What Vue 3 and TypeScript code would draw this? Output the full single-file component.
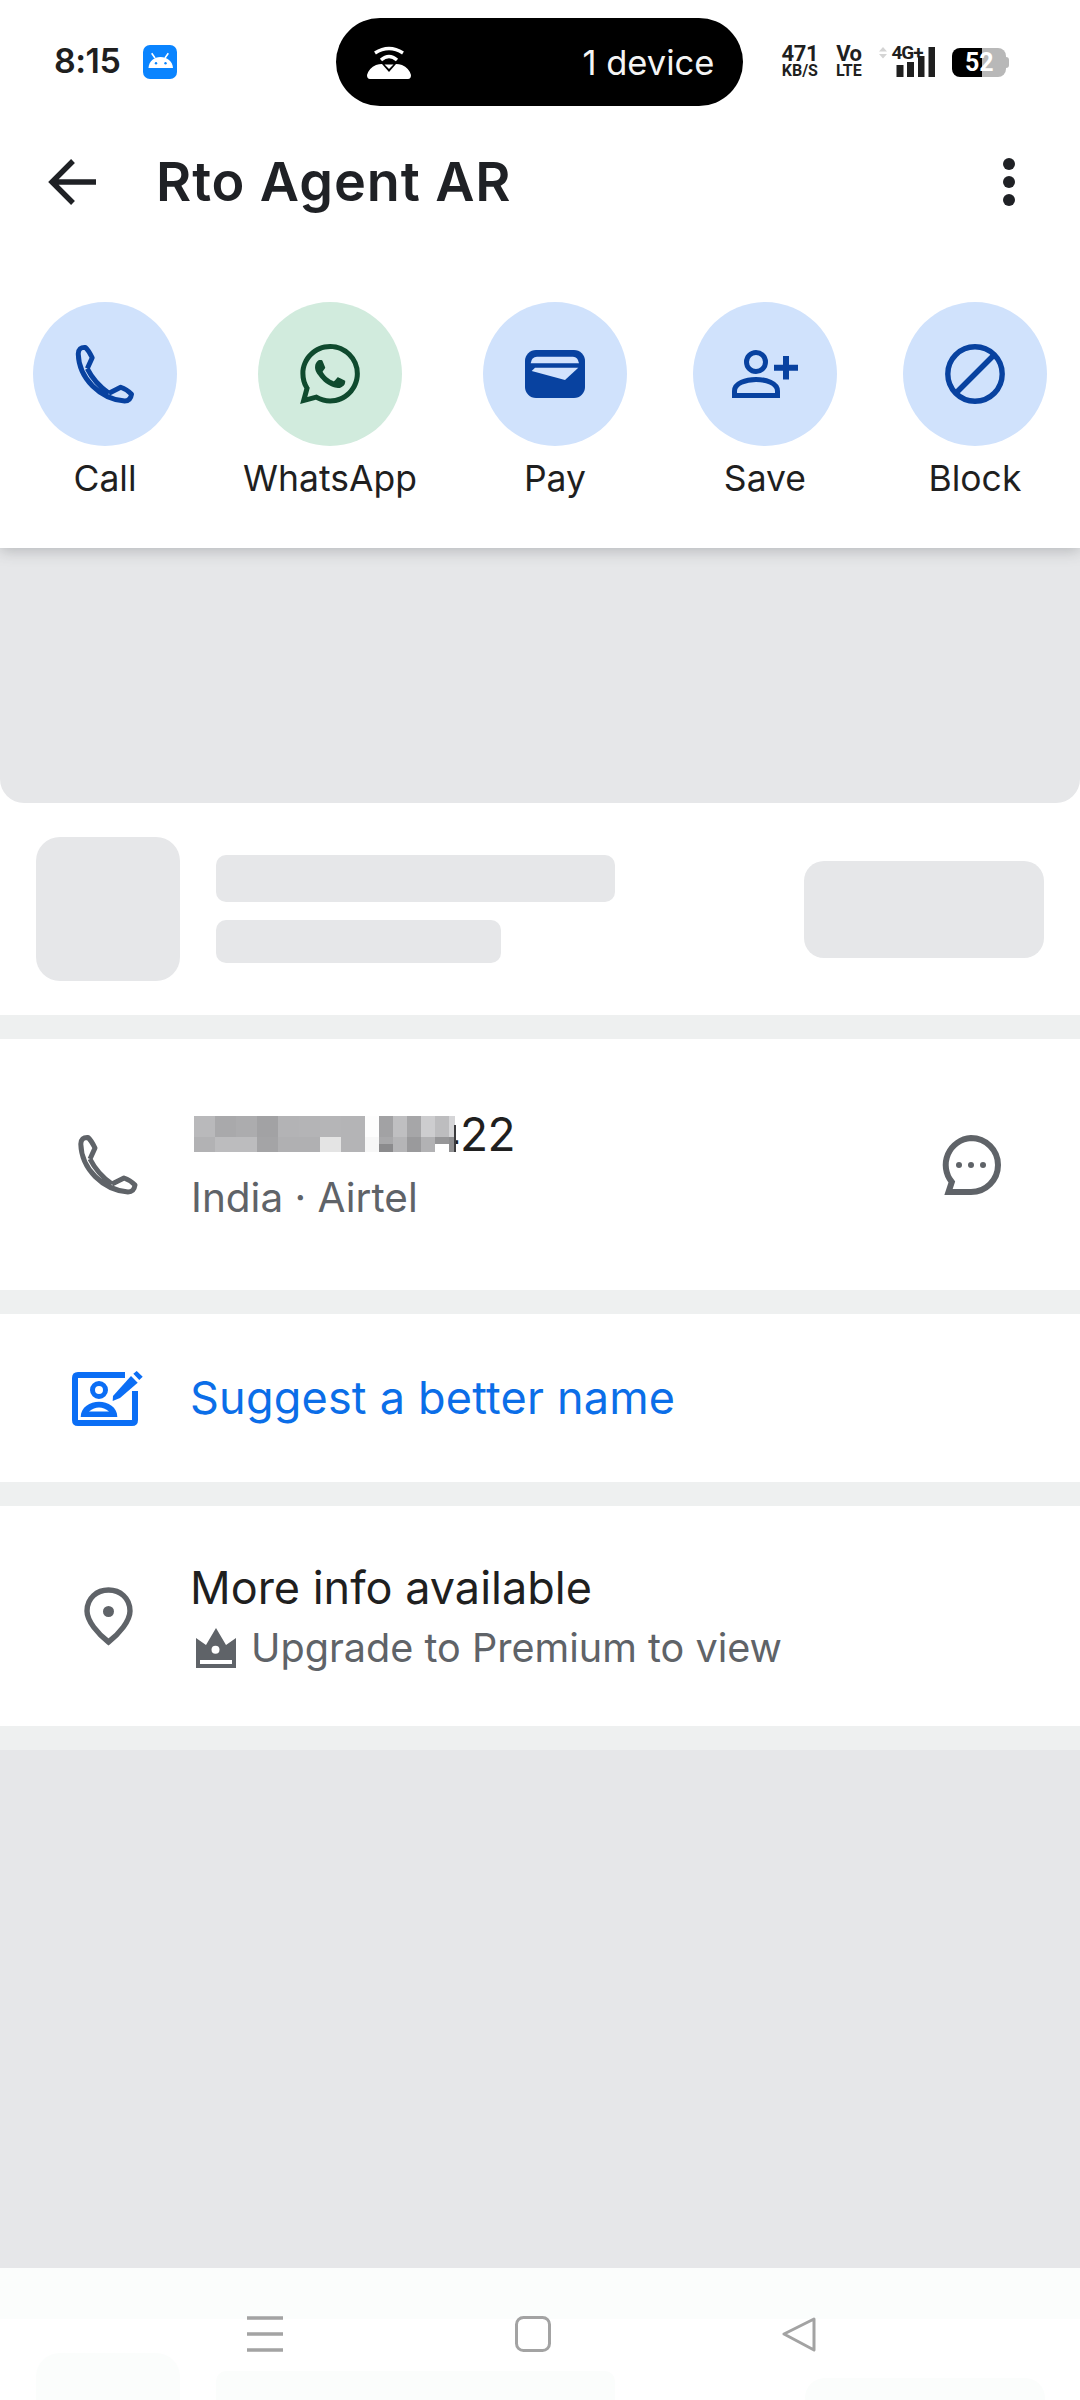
<script setup lang="ts">
const actions = [
  { label: 'Call', icon: 'call', tone: 'blue' },
  { label: 'WhatsApp', icon: 'whatsapp', tone: 'green' },
  { label: 'Pay', icon: 'pay', tone: 'blue' },
  { label: 'Save', icon: 'save', tone: 'blue' },
  { label: 'Block', icon: 'block', tone: 'blue' },
]

const handset = 'M12 25 L17 14 Q13 6 10 3.5 Q3 3 2.8 10 C3.5 35 25 56 50 58 Q56 58 57 51 Q52 46 46 44 L34 50 M12 25 C17 35 24 43 34 50'

// blurred part of the phone number, one entry per mosaic column
const mosaic = [
  { w: 21, top: '#b9b9bb', bottom: '#b2b2b4' },
  { w: 21, top: '#a9a9ab', bottom: '#bcbcbe' },
  { w: 21, top: '#acacae', bottom: '#bcbcbe' },
  { w: 21, top: '#a2a2a4', bottom: '#a4a4a6' },
  { w: 21, top: '#b3b3b5', bottom: '#b0b0b2' },
  { w: 21, top: '#b4b4b6', bottom: '#b0b0b2' },
  { w: 21, top: '#b5b5b7', bottom: '#e4e4e4' },
  { w: 24, top: '#b4b4b6', bottom: '#b4b4b6' },
  { w: 14, top: '#fdfdfd', bottom: '#f7f7f7' },
  { w: 14, top: '#a2a2a4', bottom: 'linear-gradient(#a8a8aa 7px, #8b8b8d 7px)' },
  { w: 14, top: '#bfbfc1', bottom: '#b5b5b7' },
  { w: 14, top: '#a6a6a8', bottom: '#9a9a9c' },
  { w: 14, top: '#cdcdcf', bottom: '#b2b2b4' },
  { w: 14, top: '#bdbdbf', bottom: 'linear-gradient(#969698 7px, #fff 7px)' },
  { w: 6, top: '#d5d5d7', bottom: '#8f8f91' },
]
</script>

<template>
  <div class="screen">
    <div class="top">
      <div class="status">
        <span class="time">8:15</span>
        <svg class="android" viewBox="0 0 34 34">
          <rect width="34" height="34" rx="7" fill="#0a84ff" />
          <path d="M8.7 8.3 12 13M25.3 8.3 22 13" stroke="#fff" stroke-width="1.6" />
          <path d="M5.5 23 C6 16 11 12 17.5 12 S29.5 16 30 23Z" fill="#fff" />
          <circle cx="13" cy="18.3" r="1.2" fill="#0a84ff" />
          <circle cx="22.5" cy="18.3" r="1.2" fill="#0a84ff" />
        </svg>
        <div class="pill">
          <svg class="hotspot" viewBox="0 0 44 33">
            <path d="M8 7Q22-2 36 7M14 14Q22 7 30 14" fill="none" stroke="#fff" stroke-width="3.4" />
            <path d="M17.5 18.5 H26.5 L22 23Z" fill="#fff" />
            <path d="M3 33 H41 Q44 33 44 29 Q42 22 35 19 Q32 18 29 18 L22 26 L15 18 Q12 18 9 19 Q2 22 0 29 Q0 33 3 33Z" fill="#fff" />
          </svg>
          <span class="pill-text">1 device</span>
        </div>
        <div class="tiny speed"><b>471</b><i>KB/S</i></div>
        <div class="tiny volte"><b>Vo</b><i>LTE</i></div>
        <div class="signal">
          <svg class="signal-bars" viewBox="0 0 56 30">
            <path d="M0 4.5 4 0 8 4.5ZM0 7 8 7 4 11.5Z" fill="#d4d4d4" />
            <rect x="17.5" y="18" width="7" height="12" fill="#1f1f1f" />
            <rect x="28" y="15" width="7" height="15" fill="#1f1f1f" />
            <rect x="39" y="9" width="6.5" height="21" fill="#1f1f1f" />
            <rect x="49.5" y="0" width="6.5" height="30" fill="#1f1f1f" />
          </svg>
          <span class="net">4G+</span>
        </div>
        <div class="battery"><span>52</span></div>
      </div>

      <header class="appbar">
        <svg class="back" viewBox="0 0 48 48">
          <path d="M48 24H4M25 3 4 24 25 45" fill="none" stroke="#1f2125" stroke-width="5.4" />
        </svg>
        <h1 class="title">Rto Agent AR</h1>
        <div class="more"><i></i><i></i><i></i></div>
      </header>

      <div class="actions">
        <div v-for="a in actions" :key="a.label" class="action">
          <div class="circle" :class="a.tone">
            <svg v-if="a.icon === 'call'" class="ic60" viewBox="0 0 60 61">
              <path :d="handset" fill="none" stroke="#0842a0" stroke-width="5" stroke-linejoin="round" />
            </svg>
            <svg v-else-if="a.icon === 'whatsapp'" class="ic60" viewBox="0 0 24 24">
              <path fill="#0f4a2e" d="M17.472 14.382c-.297-.149-1.758-.867-2.03-.967-.273-.099-.471-.148-.67.15-.197.297-.767.966-.94 1.164-.173.199-.347.223-.644.075-.297-.15-1.255-.463-2.39-1.475-.883-.788-1.48-1.761-1.653-2.059-.173-.297-.018-.458.13-.606.134-.133.298-.347.446-.52.149-.174.198-.298.298-.497.099-.198.05-.371-.025-.52-.075-.149-.669-1.612-.916-2.207-.242-.579-.487-.5-.669-.51-.173-.008-.371-.01-.57-.01-.198 0-.52.074-.792.372-.272.297-1.04 1.016-1.04 2.479 0 1.462 1.065 2.875 1.213 3.074.149.198 2.096 3.2 5.077 4.487.709.306 1.262.489 1.694.625.712.227 1.36.195 1.871.118.571-.085 1.758-.719 2.006-1.413.248-.694.248-1.289.173-1.413-.074-.124-.272-.198-.57-.347m-5.421 7.403h-.004a9.87 9.87 0 01-5.031-1.378l-.361-.214-3.741.982.998-3.648-.235-.374a9.86 9.86 0 01-1.51-5.26c.001-5.45 4.436-9.884 9.888-9.884 2.64 0 5.122 1.03 6.988 2.898a9.825 9.825 0 012.893 6.994c-.003 5.45-4.437 9.884-9.885 9.884m8.413-18.297A11.815 11.815 0 0012.05 0C5.495 0 .16 5.335.157 11.892c0 2.096.547 4.142 1.588 5.945L.057 24l6.305-1.654a11.882 11.882 0 005.683 1.448h.005c6.554 0 11.89-5.335 11.893-11.893a11.821 11.821 0 00-3.48-8.413z" />
            </svg>
            <svg v-else-if="a.icon === 'pay'" class="ic-pay" viewBox="0 0 60 48">
              <rect width="60" height="48" rx="11" fill="#0842a0" />
              <path d="M5.7 13.3Q6.5 6.7 12 6.7H48Q53 6.7 54 13.3Z" fill="#d3e3fd" />
              <path d="M6.7 21 10 17.7H53.3L40 30Z" fill="#d3e3fd" />
            </svg>
            <svg v-else-if="a.icon === 'save'" class="ic-save" viewBox="0 0 66 48">
              <circle cx="24" cy="12" r="9.5" fill="none" stroke="#0842a0" stroke-width="5" />
              <path d="M2.5 45.5V41C2.5 33 14 29.5 24 29.5S45.5 33 45.5 41V45.5Z" fill="none" stroke="#0842a0" stroke-width="5" />
              <path d="M42 17.7H66M54 6V29.5" stroke="#0842a0" stroke-width="6" />
            </svg>
            <svg v-else class="ic60" viewBox="0 0 60 60">
              <circle cx="30" cy="30" r="27.2" fill="none" stroke="#0842a0" stroke-width="5.4" />
              <path d="M11 49 49 11" stroke="#0842a0" stroke-width="5.4" />
            </svg>
          </div>
          <span class="action-label">{{ a.label }}</span>
        </div>
      </div>
    </div>

    <div class="hero"></div>

    <div class="skeleton">
      <div class="sk-square"></div>
      <div class="sk-lines">
        <div class="sk-line one"></div>
        <div class="sk-line two"></div>
      </div>
      <div class="sk-button"></div>
    </div>

    <section class="row phone-row">
      <svg class="row-phone" viewBox="0 0 60 61">
        <path :d="handset" fill="none" stroke="#5f6368" stroke-width="5" stroke-linejoin="round" />
      </svg>
      <div class="row-text">
        <div class="number">
          <span class="digits">422</span>
          <div class="blur">
            <div v-for="(c, i) in mosaic" :key="i" class="blur-col" :style="{ width: c.w + 'px' }">
              <span :style="{ background: c.top }"></span>
              <span :style="{ background: c.bottom }"></span>
            </div>
          </div>
        </div>
        <div class="sub">India · Airtel</div>
      </div>
      <svg class="chat" viewBox="0 0 60 60">
        <path d="M30 3A27 27 0 0 1 30 57H7.5L10.8 47A27 27 0 0 1 30 3Z" fill="none" stroke="#5f6368" stroke-width="6" />
        <circle cx="18" cy="30" r="3" fill="#5f6368" />
        <circle cx="30" cy="30" r="3" fill="#5f6368" />
        <circle cx="42" cy="30" r="3" fill="#5f6368" />
      </svg>
    </section>

    <section class="row suggest-row">
      <svg class="edit" viewBox="0 -2 73 56">
        <path d="M53 3H6Q3 3 3 6V48Q3 51 6 51H60Q63 51 63 48V19" fill="none" stroke="#0b6ef5" stroke-width="6" />
        <path d="M40.7 29 41 24 59 4 65.7 10.7 48 26Z" fill="#0b6ef5" />
        <path d="M61.3 1.7 64.7-1 70.7 4.7 67.3 8Z" fill="#0b6ef5" />
        <circle cx="27" cy="18" r="6.5" fill="none" stroke="#0b6ef5" stroke-width="5" />
        <path d="M8.7 45C8.7 35 18 29.7 27 29.7S45.3 35 45.3 45Z" fill="#0b6ef5" />
        <path d="M17 39.5Q27 31.5 37 39.5Z" fill="#fff" />
      </svg>
      <span class="suggest">Suggest a better name</span>
    </section>

    <section class="row info-row">
      <svg class="pin" viewBox="0 0 49 59">
        <path d="M24.5 3C36 3 46 11 46 24C46 34 35 47 24.5 55C14 47 3 34 3 24C3 11 13 3 24.5 3Z" fill="none" stroke="#5f6368" stroke-width="5.4" />
        <circle cx="24.5" cy="24.5" r="5.5" fill="#5f6368" />
      </svg>
      <div class="row-text">
        <div class="more-info">More info available</div>
        <div class="sub upgrade">
          <svg class="crown" viewBox="0 0 40 40">
            <path d="M0 10 10 17 20 0 30 17 40 10V40H0Z" fill="#5f6368" />
            <rect x="4" y="32" width="32" height="4" fill="#fff" />
            <circle cx="19.5" cy="21.7" r="4" fill="#fff" />
          </svg>
          <span>Upgrade to Premium to view</span>
        </div>
      </div>
    </section>

    <div class="filler"></div>

    <nav class="nav">
      <div class="nav-ghost ghost-hero"></div>
      <div class="nav-ghost ghost-a"></div>
      <div class="nav-ghost ghost-b"></div>
      <div class="nav-ghost ghost-c"></div>
      <svg class="nav-ic menu" viewBox="0 0 36 36">
        <path d="M0 2H36M0 18H36M0 34H36" stroke="#a3a3a3" stroke-width="3.4" />
      </svg>
      <svg class="nav-ic home" viewBox="0 0 36 36">
        <rect x="1.5" y="1.5" width="33" height="33" rx="7" fill="none" stroke="#a3a3a3" stroke-width="3" />
      </svg>
      <svg class="nav-ic tri" viewBox="0 0 36 36">
        <path d="M33 3 3 18 33 34Z" fill="none" stroke="#a3a3a3" stroke-width="3" stroke-linejoin="round" />
      </svg>
    </nav>
  </div>
</template>

<style scoped>
.screen {
  width: 1080px;
  height: 2400px;
  display: flex;
  flex-direction: column;
  background: #fff;
  font-family: Inter, "Liberation Sans", sans-serif;
  color: #1f1f1f;
  overflow: hidden;
}

.top {
  height: 548px;
  flex: none;
  background: #fff;
  position: relative;
  z-index: 1;
  box-shadow: 0 3px 14px rgba(60, 64, 67, 0.28);
}

.status {
  height: 124px;
  display: flex;
  align-items: flex-start;
  padding-left: 54px;
}

.time {
  margin-top: 40px;
  font-size: 34px;
  line-height: 41px;
  font-weight: 600;
  letter-spacing: -0.5px;
}

.android {
  width: 34px;
  height: 34px;
  margin: 45px 0 0 23px;
}

.pill {
  width: 407px;
  height: 88px;
  margin: 18px 38px 0 159px;
  border-radius: 44px;
  background: #000;
  display: flex;
  align-items: center;
  justify-content: space-between;
  padding: 0 29px 0 31px;
  box-sizing: border-box;
}

.hotspot {
  width: 44px;
  height: 33px;
}

.pill-text {
  color: #f4f4f4;
  font-size: 34.5px;
  line-height: 44px;
  margin-top: 2px;
}

.tiny {
  margin-top: 44px;
  display: flex;
  flex-direction: column;
  align-items: center;
  font-family: Roboto, "Liberation Sans", sans-serif;
  color: #1f1f1f;
}

.tiny b {
  font-size: 22px;
  line-height: 19px;
  font-weight: 700;
  letter-spacing: -0.4px;
}

.tiny i {
  font-style: normal;
  font-size: 16px;
  line-height: 15px;
  font-weight: 700;
}

.speed {
  width: 37px;
  margin-right: 16px;
}

.volte {
  width: 29px;
  margin-right: 16px;
}

.signal {
  position: relative;
  width: 56px;
  height: 30px;
  margin: 47px 17px 0 0;
}

.signal-bars {
  width: 56px;
  height: 30px;
  display: block;
}

.net {
  position: absolute;
  left: 12px;
  top: -4px;
  font-family: Roboto, "Liberation Sans", sans-serif;
  font-size: 19px;
  line-height: 20px;
  font-weight: 700;
  letter-spacing: -1px;
}

.battery {
  position: relative;
  width: 54px;
  height: 29px;
  margin-top: 48px;
  border-radius: 8px 8px 8px 8px;
  background: linear-gradient(90deg, #000 30px, #b8b8b8 30px);
  display: flex;
  justify-content: center;
  align-items: center;
  color: #fff;
  font-family: Roboto, "Liberation Sans", sans-serif;
  font-weight: 700;
  font-size: 25px;
}

.battery::after {
  content: '';
  position: absolute;
  right: -3px;
  top: 9px;
  width: 3px;
  height: 11px;
  border-radius: 0 3px 3px 0;
  background: #b8b8b8;
}

.appbar {
  height: 116px;
  display: flex;
  align-items: center;
  padding: 0 65px 0 48px;
}

.back {
  width: 48px;
  height: 48px;
  flex: none;
}

.title {
  margin: 0 0 0 60px;
  font-size: 54px;
  line-height: 60px;
  font-weight: 600;
  letter-spacing: 0.9px;
  color: #1f2125;
}

.more {
  margin-left: auto;
  display: flex;
  flex-direction: column;
  gap: 6px;
}

.more i {
  display: block;
  width: 12px;
  height: 12px;
  border-radius: 50%;
  background: #1f2125;
}

.actions {
  display: flex;
  justify-content: space-between;
  padding: 62px 33px 0 33px;
}

.action {
  display: flex;
  flex-direction: column;
  align-items: center;
}

.circle {
  width: 144px;
  height: 144px;
  border-radius: 50%;
  display: flex;
  align-items: center;
  justify-content: center;
}

.circle.blue {
  background: #d0e2fc;
}

.circle.green {
  background: #d1ebdd;
}

.ic60 {
  width: 60px;
  height: 60px;
}

.ic-pay {
  width: 60px;
  height: 48px;
}

.ic-save {
  width: 66px;
  height: 48px;
}

.action-label {
  margin-top: 11px;
  font-size: 35.5px;
  line-height: 44px;
}

.hero {
  height: 255px;
  flex: none;
  background: #e6e7e9;
  border-radius: 0 0 24px 24px;
}

.skeleton {
  height: 212px;
  flex: none;
  display: flex;
  align-items: center;
  padding: 0 36px;
  gap: 36px;
  border-bottom: 24px solid #eef0f0;
}

.sk-square {
  width: 144px;
  height: 144px;
  border-radius: 24px;
  background: #e6e7e9;
}

.sk-lines {
  display: flex;
  flex-direction: column;
  gap: 18px;
}

.sk-line {
  background: #e6e7e9;
  border-radius: 10px;
}

.sk-line.one {
  width: 399px;
  height: 47px;
}

.sk-line.two {
  width: 285px;
  height: 43px;
}

.sk-button {
  margin-left: auto;
  width: 240px;
  height: 97px;
  border-radius: 20px;
  background: #e6e7e9;
}

.row {
  flex: none;
  display: flex;
  align-items: center;
  background: #fff;
  border-bottom: 24px solid #eef0f0;
}

.phone-row {
  height: 251px;
  padding: 0 79px 0 78px;
}

.row-phone {
  width: 60px;
  height: 61px;
  margin-right: 56px;
}

.number {
  position: relative;
  height: 56px;
  font-size: 46px;
  line-height: 56px;
  padding-left: 237px;
  letter-spacing: -0.6px;
}

.blur {
  position: absolute;
  left: 0;
  top: 10px;
  height: 36px;
  display: flex;
}

/* stem of the half hidden digit that shows at the mosaic's edge */
.blur::after {
  content: '';
  position: absolute;
  right: -1px;
  top: 9px;
  bottom: 0;
  width: 2px;
  background: #3c3c3e;
}

.blur-col {
  display: flex;
  flex-direction: column;
}

.blur-col span:first-child {
  height: 21px;
}

.blur-col span:last-child {
  height: 15px;
}

.sub {
  font-size: 40px;
  line-height: 50px;
  color: #5f6368;
}

.phone-row .sub {
  margin: 11px 0 0 -3px;
  font-size: 40.5px;
}

.chat {
  margin-left: auto;
  width: 60px;
  height: 60px;
}

.suggest-row {
  height: 168px;
  padding-left: 72px;
}

.edit {
  width: 73px;
  height: 56px;
  margin-right: 45px;
}

.suggest {
  font-size: 45px;
  line-height: 56px;
  letter-spacing: 0.2px;
  color: #0b6ee8;
}

.info-row {
  height: 220px;
  padding-left: 84px;
}

.pin {
  width: 49px;
  height: 59px;
  margin-right: 57px;
}

.more-info {
  font-size: 45px;
  line-height: 56px;
}

.upgrade {
  display: flex;
  align-items: center;
  margin-top: 7px;
  font-size: 39.6px;
}

.crown {
  width: 40px;
  height: 40px;
  margin-right: 15px;
  margin-left: 6px;
}

.filler {
  flex: 1;
  background: #e6e7e9;
}

.nav {
  height: 132px;
  flex: none;
  box-sizing: border-box;
  position: relative;
  background: #fff;
  display: flex;
  align-items: flex-start;
  padding: 48px 0 0 247px;
}

.nav-ghost {
  position: absolute;
  background: #fbfdfc;
}

.ghost-hero {
  left: 0;
  right: 0;
  top: 0;
  height: 51px;
}

.ghost-a {
  left: 36px;
  top: 85px;
  width: 144px;
  height: 47px;
  border-radius: 24px 24px 0 0;
}

.ghost-b {
  left: 216px;
  top: 103px;
  width: 399px;
  height: 29px;
  border-radius: 10px 10px 0 0;
}

.ghost-c {
  left: 805px;
  top: 110px;
  width: 240px;
  height: 22px;
  border-radius: 20px 20px 0 0;
}

.nav-ic {
  position: relative;
  width: 36px;
  height: 36px;
}

.home {
  margin-left: 232px;
}

.tri {
  margin-left: 230px;
}
</style>

<style>
html,
body {
  margin: 0;
  background: #fff;
}
</style>
